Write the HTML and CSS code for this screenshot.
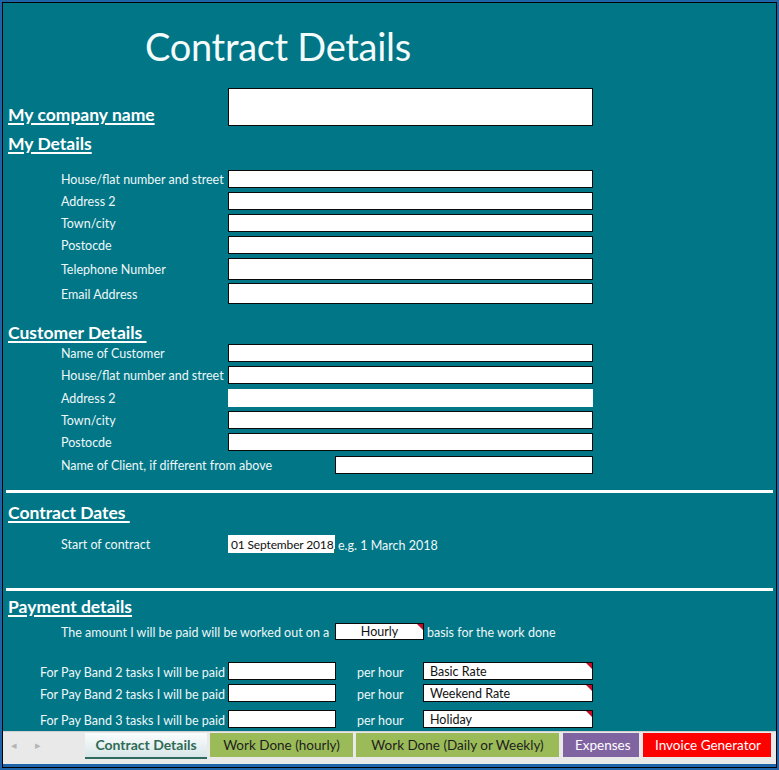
FILE: index.html
```html
<!DOCTYPE html>
<html lang="en">
<head>
<meta charset="utf-8">
<title>Contract Details</title>
<link rel="stylesheet" href="styles.css">
</head>
<body>
<div class="frame">
  <div class="sheet">
    <h1 class="title">Contract Details</h1>

    <div class="company">
      <span class="heading company-heading">My company name</span>
      <span class="box box-company"></span>
    </div>

    <div class="heading sec-my">My Details</div>
    <div class="fields fields-my">
      <div class="field"><span class="label">House/flat number and street</span><span class="box"></span></div>
      <div class="field"><span class="label">Address 2</span><span class="box"></span></div>
      <div class="field"><span class="label">Town/city</span><span class="box"></span></div>
      <div class="field"><span class="label">Postocde</span><span class="box"></span></div>
      <div class="field field-tall"><span class="label">Telephone Number</span><span class="box"></span></div>
      <div class="field field-tall2"><span class="label">Email Address</span><span class="box"></span></div>
    </div>

    <div class="heading sec-customer">Customer Details&nbsp;</div>
    <div class="fields fields-customer">
      <div class="field"><span class="label">Name of Customer</span><span class="box"></span></div>
      <div class="field"><span class="label">House/flat number and street</span><span class="box"></span></div>
      <div class="field field-gap"><span class="label">Address 2</span><span class="box box-plain"></span></div>
      <div class="field"><span class="label">Town/city</span><span class="box"></span></div>
      <div class="field"><span class="label">Postocde</span><span class="box"></span></div>
      <div class="field field-gap"><span class="label label-wide">Name of Client, if different from above</span><span class="box box-client"></span></div>
    </div>

    <div class="rule rule-1"></div>

    <div class="heading sec-dates">Contract Dates&nbsp;</div>
    <div class="field field-date">
      <span class="label">Start of contract</span>
      <span class="datebox">01 September 2018</span>
      <span class="hint">e.g. 1 March 2018</span>
    </div>

    <div class="rule rule-2"></div>

    <div class="heading sec-pay">Payment details</div>
    <div class="amount">
      <span class="amount-text">The amount I will be paid will be worked out on a</span>
      <span class="box box-basis marked">Hourly</span>
      <span class="amount-after">basis for the work done</span>
    </div>

    <div class="bands">
      <div class="band"><span class="band-label">For Pay Band 2 tasks I will be paid</span><span class="box box-pay"></span><span class="per">per hour</span><span class="box box-rate marked">Basic Rate</span></div>
      <div class="band"><span class="band-label">For Pay Band 2 tasks I will be paid</span><span class="box box-pay"></span><span class="per">per hour</span><span class="box box-rate marked">Weekend Rate</span></div>
      <div class="band band-last"><span class="band-label">For Pay Band 3 tasks I will be paid</span><span class="box box-pay"></span><span class="per">per hour</span><span class="box box-rate marked">Holiday</span></div>
    </div>
  </div>

  <div class="tabbar">
    <div class="navs">
      <span class="nav">&#9666;</span>
      <span class="nav">&#9656;</span>
    </div>
    <span class="tab tab-active">Contract Details</span>
    <span class="tab tab-green tab-hourly">Work Done (hourly)</span>
    <span class="tab tab-green tab-daily">Work Done (Daily or Weekly)</span>
    <span class="tab tab-purple">Expenses</span>
    <span class="tab tab-red">Invoice Generator</span>
  </div>
</div>
</body>
</html>
```

FILE: styles.css
```css
* { box-sizing: border-box; }

html, body {
  margin: 0;
  padding: 0;
  background: #1d64a8;
}

body {
  font-family: Lato, "Open Sans", "Liberation Sans", sans-serif;
  color: #ffffff;
}

.frame {
  width: 779px;
  height: 770px;
  border: 2px solid #1d64a8;
  display: flex;
  flex-direction: column;
  background: #000;
  padding: 1px;
}

.sheet {
  flex: 1;
  background: #017687;
  display: flex;
  flex-direction: column;
  overflow: hidden;
}

.title {
  margin: 0;
  padding: 24px 0 0 142px;
  height: 85px;
  font-size: 38px;
  line-height: 38px;
  font-weight: 400;
  color: #f4fbfb;
  letter-spacing: -0.3px;
}

.heading {
  font-size: 17.5px;
  font-weight: 700;
  text-decoration: underline;
  text-decoration-thickness: 1.5px;
  text-underline-offset: 2px;
  line-height: 20px;
  padding-left: 5px;
  white-space: pre;
}

.company {
  display: flex;
  align-items: flex-end;
  height: 38px;
}

.company-heading {
  width: 225px;
  margin-bottom: 1px;
}

.box {
  display: block;
  width: 365px;
  height: 18px;
  background: #ffffff;
  border: 1px solid #0a0a0a;
  flex: none;
}

.box-company { height: 38px; }

.sec-my { margin-top: 8px; }

.fields {
  display: flex;
  flex-direction: column;
  gap: 4px;
}

.fields-my { margin-top: 16px; }

.field {
  display: flex;
  align-items: center;
  padding-left: 58px;
  height: 18px;
}

.field-tall { height: 22px; }
.field-tall2 { height: 21px; margin-top: -1px; }
.field-tall .box, .field-tall2 .box { height: 100%; }
.field-gap { margin-top: 1px; }

.label {
  width: 167px;
  font-size: 12.5px;
  line-height: 14px;
  padding-top: 2px;
  white-space: nowrap;
  color: #eef7f8;
}

.label-wide { width: 274px; }

.box-plain { border-color: #ffffff; }
.box-client { width: 258px; }

.sec-customer { margin-top: 19px; }
.fields-customer { margin-top: 1px; }

.rule {
  height: 3px;
  background: #ffffff;
  margin: 0 3px;
}

.rule-1 { margin-top: 16px; }
.rule-2 { margin-top: 35px; }

.sec-dates { margin-top: 10px; }

.field-date {
  margin-top: 12px;
}

.datebox {
  width: 107px;
  height: 18px;
  flex: none;
  background: #ffffff;
  color: #111;
  font-size: 12px;
  letter-spacing: -0.15px;
  line-height: 19px;
  padding-left: 3px;
  white-space: nowrap;
  position: relative;
}

.datebox::after {
  content: "";
  position: absolute;
  right: 0;
  bottom: -1px;
  width: 1px;
  height: 5px;
  background: #1f7a3a;
}

.hint {
  font-size: 12.5px;
  padding: 2px 0 0 3px;
  color: #eef7f8;
}

.sec-pay { margin-top: 6px; }

.amount {
  display: flex;
  align-items: center;
  margin-top: 6px;
  padding-left: 58px;
  height: 17px;
  font-size: 12.5px;
  color: #eef7f8;
}

.amount-text { width: 274px; white-space: nowrap; padding-top: 2px; }

.box-basis {
  width: 89px;
  height: 17px;
  color: #111;
  text-align: center;
  line-height: 16px;
  font-size: 12.5px;
}

.amount-after { padding: 2px 0 0 3px; }

.marked { position: relative; }
.marked::after {
  content: "";
  position: absolute;
  top: 0;
  right: 0;
  border-style: solid;
  border-width: 0 6px 6px 0;
  border-color: transparent #c0102a transparent transparent;
}

.bands {
  display: flex;
  flex-direction: column;
  gap: 4px;
  margin-top: 22px;
}

.band {
  display: flex;
  align-items: center;
  height: 18px;
  padding-left: 37px;
  font-size: 12.5px;
  color: #eef7f8;
}

.band-last { margin-top: 4px; }

.band-label { width: 188px; white-space: nowrap; padding-top: 2px; }

.box-pay { width: 108px; }

.per { width: 87px; padding: 2px 0 0 21px; }

.box-rate {
  width: 170px;
  color: #111;
  line-height: 17px;
  padding-left: 6px;
  font-size: 12.5px;
}

.tabbar {
  height: 36px;
  flex: none;
  background: #e9e9e9;
  border-top: 1px solid #d0d0d0;
  border-bottom: 3px solid #1d64a8;
  display: flex;
  align-items: flex-start;
  padding-top: 1px;
  gap: 3px;
}

.navs {
  width: 79px;
  display: flex;
  gap: 18px;
  padding: 5px 0 0 8px;
  font-size: 11px;
  color: #b5b5b5;
}

.tab {
  height: 24px;
  font-size: 13.5px;
  line-height: 24px;
  padding: 0 12px;
  white-space: nowrap;
  color: #1e1e1e;
  text-align: center;
}

.tab-active {
  width: 122px;
  height: 26px;
  background: linear-gradient(#fbfdfd, #d9e6e8);
  border-bottom: 2px solid #2f6c5f;
  color: #2f6b55;
  font-weight: 700;
  font-size: 14px;
  padding: 0;
}

.tab-green { background: #9bbb59; }
.tab-hourly { width: 143px; }
.tab-daily { width: 203px; }

.tab-purple {
  width: 76px;
  background: #8064a2;
  color: #ffffff;
  margin-left: 1px;
}

.tab-red {
  width: 128px;
  background: #ff0000;
  color: #ffffff;
  margin-left: 1px;
}
```
